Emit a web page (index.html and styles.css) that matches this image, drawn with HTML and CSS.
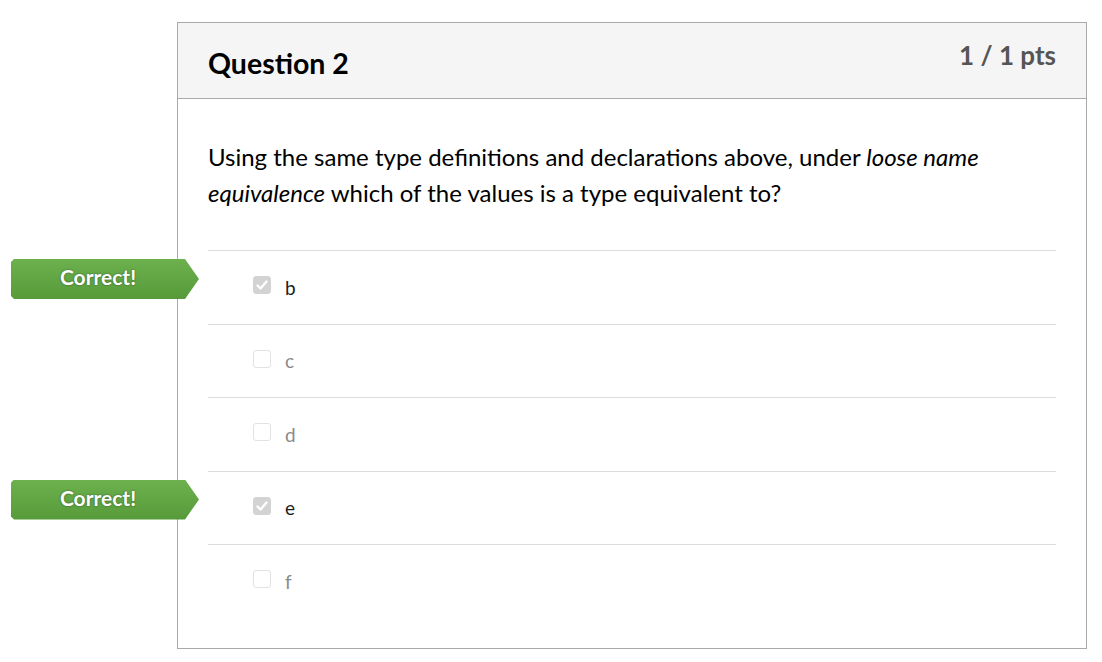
FILE: index.html
```html
<!DOCTYPE html>
<html>
<head>
<meta charset="utf-8">
<link rel="stylesheet" href="styles.css">
</head>
<body>
<div class="card">
  <div class="card-header">
    <h2 class="q-title">Question 2</h2>
    <div class="pts">1 / 1 pts</div>
  </div>
  <div class="card-body">
    <p class="q-text">Using the same type definitions and declarations above, under <em>loose name equivalence</em> which of the values is a type equivalent to?</p>
    <div class="answers">
      <div class="answer selected">
        <div class="badge">Correct!</div>
        <span class="box checked"><svg viewBox="0 0 18 18" width="18" height="18"><path d="M4.5 9.5 L7.5 12.5 L13.5 5.5" fill="none" stroke="#fff" stroke-width="2.4" stroke-linecap="round" stroke-linejoin="round"/></svg></span>
        <span class="label">b</span>
      </div>
      <div class="answer">
        <span class="box"></span>
        <span class="label">c</span>
      </div>
      <div class="answer">
        <span class="box"></span>
        <span class="label">d</span>
      </div>
      <div class="answer selected">
        <div class="badge">Correct!</div>
        <span class="box checked"><svg viewBox="0 0 18 18" width="18" height="18"><path d="M4.5 9.5 L7.5 12.5 L13.5 5.5" fill="none" stroke="#fff" stroke-width="2.4" stroke-linecap="round" stroke-linejoin="round"/></svg></span>
        <span class="label">e</span>
      </div>
      <div class="answer">
        <span class="box"></span>
        <span class="label">f</span>
      </div>
    </div>
  </div>
</div>
</body>
</html>
```

FILE: styles.css
```css
* { box-sizing: border-box; }
html, body { margin: 0; padding: 0; background: #fff; }
body {
  font-family: Lato, "Noto Sans", sans-serif;
  color: #000;
}
.card {
  margin: 22px 0 0 177px;
  width: 910px;
  height: 627px;
  border: 1px solid #aaaaaa;
}
.card-header {
  height: 76px;
  background: #f5f5f5;
  border-bottom: 1px solid #aaaaaa;
  display: flex;
  justify-content: space-between;
  padding: 0 30px;
}
.q-title {
  margin: 0;
  padding-top: 23px;
  font-size: 28.5px;
  font-weight: 700;
  line-height: 34px;
  color: #000;
}
.pts {
  padding-top: 17px;
  font-size: 26px;
  font-weight: 700;
  line-height: 30px;
  color: #555;
}
.card-body {
  padding: 40px 30px 0 30px;
}
.q-text {
  margin: 0 0 39px 0;
  font-size: 24px;
  line-height: 36px;
  color: #000;
}
.answer {
  position: relative;
  height: 73.5px;
  border-top: 1px solid #dcdcdc;
  display: flex;
  align-items: center;
  padding-left: 45px;
  gap: 14px;
}
.box {
  width: 18px;
  height: 18px;
  border: 1px solid #e2e2e2;
  border-radius: 3px;
  background: #fff;
  display: inline-block;
  margin-top: -4px;
}
.box.checked {
  background: #d3d3d3;
  border-color: #d3d3d3;
  position: relative;
}
.box.checked svg {
  position: absolute;
  left: -1px;
  top: -1px;
}
.label {
  font-size: 19px;
  color: #8a8a8a;
}
.selected .label { color: #1d1d1d; }
.badge {
  position: absolute;
  left: -197px;
  top: 8px;
  width: 188px;
  height: 40px;
  padding: 0 14px 5px 0;
  display: flex;
  align-items: center;
  justify-content: center;
  color: #fff;
  font-size: 21px;
  font-weight: 700;
  text-shadow: 0 0 2px rgba(0,0,0,0.5);
  background: linear-gradient(#6db14f, #569a39);
  clip-path: polygon(0 3px, 3px 0, 174px 0, 188px 50%, 174px 100%, 3px 100%, 0 calc(100% - 3px));
}
```
